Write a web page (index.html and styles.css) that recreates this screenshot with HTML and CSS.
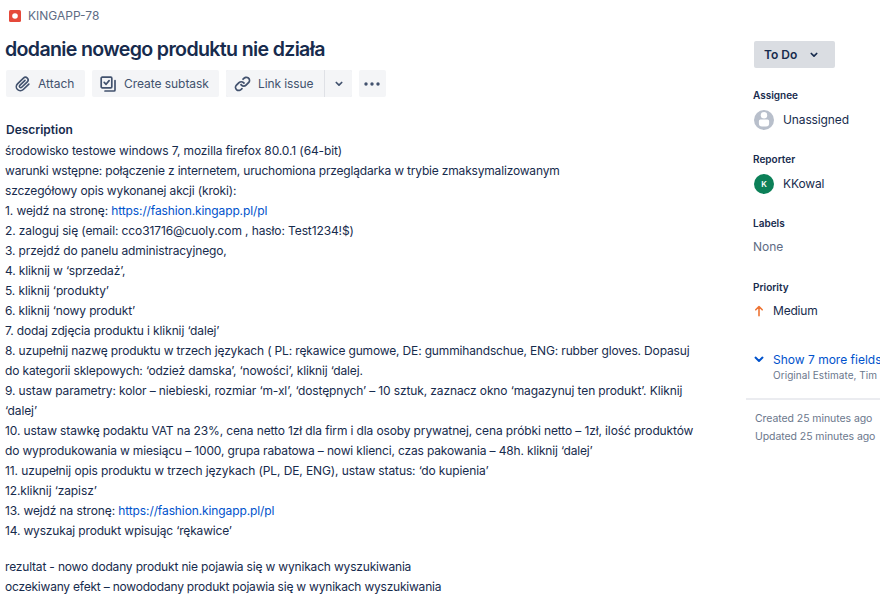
FILE: index.html
```html
<!DOCTYPE html>
<html lang="pl">
<head>
<meta charset="utf-8">
<title>KINGAPP-78</title>
<link rel="stylesheet" href="styles.css">
</head>
<body>
<div class="issue">
  <main class="content">
    <div class="crumb">
      <svg class="bug" viewBox="0 0 12 12"><rect width="12" height="12" rx="1.5" fill="#e5493a"/><circle cx="6" cy="6" r="2.8" fill="#fff"/></svg>
      <span>KINGAPP-78</span>
    </div>
    <h1>dodanie nowego produktu nie działa</h1>
    <div class="toolbar">
      <button class="btn attach">
        <svg width="24" height="24" viewBox="0 0 24 24" fill="#42526e"><path d="M11.643 17.965c-1.53 1.495-4.016 1.496-5.542.004a3.773 3.773 0 01.002-5.412l7.147-6.985a2.316 2.316 0 013.233-.003c.893.873.895 2.282.004 3.153l-6.703 6.55a.653.653 0 01-.914-.008.62.62 0 010-.902l6.229-6.087a.941.941 0 000-1.353.995.995 0 00-1.384 0l-6.23 6.087a2.502 2.502 0 000 3.607 2.643 2.643 0 003.683.009l6.703-6.55a4.178 4.178 0 00-.003-5.858 4.306 4.306 0 00-6.002.003l-7.148 6.985a5.655 5.655 0 00-.001 8.118c2.29 2.239 6.015 2.238 8.31-.005l6.686-6.533a.941.941 0 000-1.353.995.995 0 00-1.384 0l-6.686 6.533z"/></svg>
        <span>Attach</span>
      </button>
      <button class="btn subtask">
        <svg width="16" height="16" viewBox="0 0 16 16" fill="none" stroke="#42526e" stroke-width="1.7" stroke-linecap="round" stroke-linejoin="round"><rect x="1.2" y="1.2" width="10.6" height="10.6" rx="1"/><path d="M4.2 6.4l1.9 1.9 3-3.7M15 4.5V14a1 1 0 01-1 1H5"/></svg>
        <span>Create subtask</span>
      </button>
      <div class="split">
        <button class="btn link">
          <svg width="24" height="24" viewBox="0 0 24 24" fill="#42526e"><path d="M12.856 5.457l-.937.92a1.002 1.002 0 000 1.437 1.047 1.047 0 001.463 0l.984-.966c.967-.95 2.542-1.135 3.602-.288a2.54 2.54 0 01.203 3.81l-2.903 2.852a2.646 2.646 0 01-3.696 0l-1.11-1.09L9 13.57l1.108 1.089c1.822 1.788 4.802 1.788 6.622 0l2.905-2.852a4.558 4.558 0 00-.357-6.82c-1.893-1.517-4.695-1.226-6.422.47"/><path d="M11.144 19.543l.937-.92a1.002 1.002 0 000-1.437 1.047 1.047 0 00-1.462 0l-.985.966c-.967.95-2.542 1.135-3.602.288a2.54 2.54 0 01-.203-3.81l2.903-2.852a2.646 2.646 0 013.696 0l1.11 1.09L15 11.43l-1.108-1.089c-1.822-1.788-4.802-1.788-6.622 0l-2.905 2.852a4.558 4.558 0 00.357 6.82c1.893 1.517 4.695 1.226 6.422-.47"/></svg>
          <span>Link issue</span>
        </button>
        <button class="btn more"><svg width="8" height="6" viewBox="0 0 8 6" fill="none" stroke="#42526e" stroke-width="1.7" stroke-linecap="round" stroke-linejoin="round"><path d="M1.3 1.5L4 4.2l2.7-2.7"/></svg></button>
      </div>
      <button class="btn dots"><svg width="16" height="4" viewBox="0 0 16 4" fill="#42526e"><circle cx="2" cy="2" r="1.7"/><circle cx="8" cy="2" r="1.7"/><circle cx="14" cy="2" r="1.7"/></svg></button>
    </div>
    <h2>Description</h2>
    <div class="description">
      <p>środowisko testowe windows 7, mozilla firefox 80.0.1 (64-bit)<br>
      <span class="tighter">warunki wstępne: połączenie z internetem, uruchomiona przeglądarka w trybie zmaksymalizowanym</span><br>
      <span class="tight">szczegółowy opis wykonanej akcji (kroki):</span><br>
      1. wejdź na stronę: <a>https://fashion.kingapp.pl/pl</a><br>
      2. zaloguj się (email: cco31716@cuoly.com , hasło: Test1234!$)<br>
      <span class="snug">3. przejdź do panelu administracyjnego,</span><br>
      <span class="snug">4. kliknij w ‘sprzedaż’,</span><br>
      5. kliknij ‘produkty’<br>
      <span class="snug">6. kliknij ‘nowy produkt’</span><br>
      7. dodaj zdjęcia produktu i kliknij ‘dalej’<br>
      <span class="tight">8. uzupełnij nazwę produktu w trzech językach ( PL: rękawice gumowe, DE: gummihandschue, ENG: rubber gloves. Dopasuj</span><br>
      <span class="tight">do kategorii sklepowych: ‘odzież damska’, ‘nowości’, kliknij ‘dalej.</span><br>
      <span class="snug">9. ustaw parametry: kolor – niebieski, rozmiar ‘m-xl’, ‘dostępnych’ – 10 sztuk, zaznacz okno ‘magazynuj ten produkt’. Kliknij</span><br>
      ‘dalej’<br>
      <span class="snug">10. ustaw stawkę podaktu VAT na 23%, cena netto 1zł dla firm i dla osoby prywatnej, cena próbki netto – 1zł, ilość produktów</span><br>
      <span class="tight">do wyprodukowania w miesiącu – 1000, grupa rabatowa – nowi klienci, czas pakowania – 48h. kliknij ‘dalej’</span><br>
      11. uzupełnij opis produktu w trzech językach (PL, DE, ENG), ustaw status: ‘do kupienia’<br>
      12.kliknij ‘zapisz’<br>
      13. wejdź na stronę: <a>https://fashion.kingapp.pl/pl</a><br>
      <span class="tight">14. wyszukaj produkt wpisując ‘rękawice’</span></p>
      <p><span class="tighter">rezultat - nowo dodany produkt nie pojawia się w wynikach wyszukiwania</span><br>
      <span class="tightest">oczekiwany efekt – nowododany produkt pojawia się w wynikach wyszukiwania</span></p>
    </div>
  </main>
  <aside class="side">
    <button class="status"><span>To Do</span><svg width="8" height="6" viewBox="0 0 8 6" fill="none" stroke="#172b4d" stroke-width="1.7" stroke-linecap="round" stroke-linejoin="round"><path d="M1.3 1.5L4 4.2l2.7-2.7"/></svg></button>
    <section class="field">
      <h3>Assignee</h3>
      <div class="value"><svg class="avatar" viewBox="0 0 20 20"><circle cx="10" cy="10" r="10" fill="#b8bfcb"/><circle cx="10" cy="5.3" r="3.2" fill="#fff"/><path d="M4.900 11a1.500 1.500 0 011.500-1.500h7.200a1.500 1.500 0 011.500 1.500v2.600a3 3 0 01-3 3H7.900a3 3 0 01-3-3z" fill="#fff"/></svg><span>Unassigned</span></div>
    </section>
    <section class="field">
      <h3>Reporter</h3>
      <div class="value"><span class="avatar initial">K</span><span>KKowal</span></div>
    </section>
    <section class="field">
      <h3>Labels</h3>
      <div class="value none">None</div>
    </section>
    <section class="field">
      <h3>Priority</h3>
      <div class="value priority"><svg width="10" height="12" viewBox="0 0 10 12" fill="none" stroke="#ee7434" stroke-width="1.6" stroke-linecap="round" stroke-linejoin="round"><path d="M5 10.700V1.800M1.800 4.800L5 1.500l3.200 3.300"/></svg><span>Medium</span></div>
    </section>
    <div class="show">
      <svg width="10" height="7" viewBox="0 0 10 7" fill="none" stroke="#0052cc" stroke-width="2" stroke-linecap="round" stroke-linejoin="round"><path d="M1.500 1.600L5 4.900l3.500-3.300"/></svg>
      <div><div class="show-title">Show 7 more fields</div><div class="show-sub">Original Estimate, Tim</div></div>
    </div>
    <div class="dates"><div>Created 25 minutes ago</div><div>Updated 25 minutes ago</div></div>
  </aside>
</div>
</body>
</html>
```
FILE: styles.css
```css
* { box-sizing: border-box; }
body { margin: 0; background: #fff; color: #172b4d; font: 12px/20px Inter, "Noto Sans", sans-serif; overflow: hidden; }
h1, h2, h3, p { margin: 0; }
.issue { display: flex; width: 880px; height: 602px; overflow: hidden; }
.content { flex: 0 0 746px; padding: 6px 0 0 5px; }
.crumb { display: flex; align-items: center; gap: 7px; height: 20px; padding-left: 4px; color: #5e6c84; }
.bug { width: 12px; height: 12px; }
h1 { margin-top: 8px; font-size: 19.6px; line-height: 30px; font-weight: 600; letter-spacing: -0.66px; white-space: nowrap; }
.toolbar { display: flex; margin: 6px 0 0 1px; height: 27px; }
.btn { display: flex; align-items: center; height: 27px; padding: 0; border: 0; border-radius: 2px; background: #f4f5f7; color: #42526e; font: inherit; white-space: nowrap; }
.attach { width: 79px; padding-left: 6px; gap: 4px; margin-right: 7px; }
.attach svg, .link svg { width: 22px; height: 22px; }
.attach svg { width: 20px; height: 20px; margin: 0 1px; }
.link svg { width: 21px; height: 21px; margin-right: 1px; }
.link span { letter-spacing: -0.1px; }
.subtask { width: 127px; padding-left: 8px; gap: 8px; margin-right: 7px; letter-spacing: -0.05px; }
.split { display: flex; gap: 1px; background: #dfe1e6; margin-right: 7px; border-radius: 2px; }
.link { width: 98px; padding-left: 6px; gap: 4px; border-radius: 2px 0 0 2px; }
.more { width: 27px; justify-content: center; border-radius: 0 2px 2px 0; }
.dots { width: 27px; padding-right: 1px; justify-content: center; }
h2 { margin: 23px 0 0 1px; font-size: 12px; line-height: 20px; font-weight: 600; }
.description { margin-top: 1px; white-space: nowrap; letter-spacing: -0.11px; }
.snug { letter-spacing: -0.125px; }
.tight { letter-spacing: -0.155px; }
.tighter { letter-spacing: -0.18px; }
.tightest { letter-spacing: -0.215px; }
.description p + p { margin-top: 16px; }
.description a { color: #0052cc; }
.side { flex: 0 0 134px; padding-top: 41px; white-space: nowrap; overflow: hidden; }
.status { display: flex; align-items: center; gap: 13px; width: 81px; height: 27px; margin-left: 8px; padding: 0 0 0 10px; border: 0; border-radius: 2px; background: #dadde2; color: #172b4d; font: 600 12px/20px Inter, sans-serif; }
.field { height: 64px; padding-left: 7px; }
.status + .field { margin-top: 19px; }
h3 { font-size: 10px; line-height: 16px; font-weight: 600; }
.value { display: flex; align-items: center; gap: 9px; height: 20px; margin-top: 7px; padding-left: 1px; letter-spacing: -0.12px; }
.avatar { width: 20px; height: 20px; flex: none; }
.initial { display: flex; align-items: center; justify-content: center; border-radius: 50%; background: #0c8058; color: #fff; font-size: 8px; font-weight: 600; }
.none { margin-top: 6px; padding-left: 0; color: #5e6c84; letter-spacing: 0; }
.priority { margin-top: 6px; letter-spacing: -0.2px; }
.show { display: flex; gap: 9px; height: 48px; margin-top: 7px; padding-left: 8px; }
.show > svg { flex: none; margin-top: 6px; }
.show-title { color: #0052cc; line-height: 20px; }
.show-sub { color: #6b778c; font-size: 10px; line-height: 11px; letter-spacing: 0.05px; }
.dates { border-top: 2px solid #ebecf0; padding: 10px 0 0 9px; color: #6b778c; font-size: 10.5px; line-height: 18px; letter-spacing: -0.07px; }
```
